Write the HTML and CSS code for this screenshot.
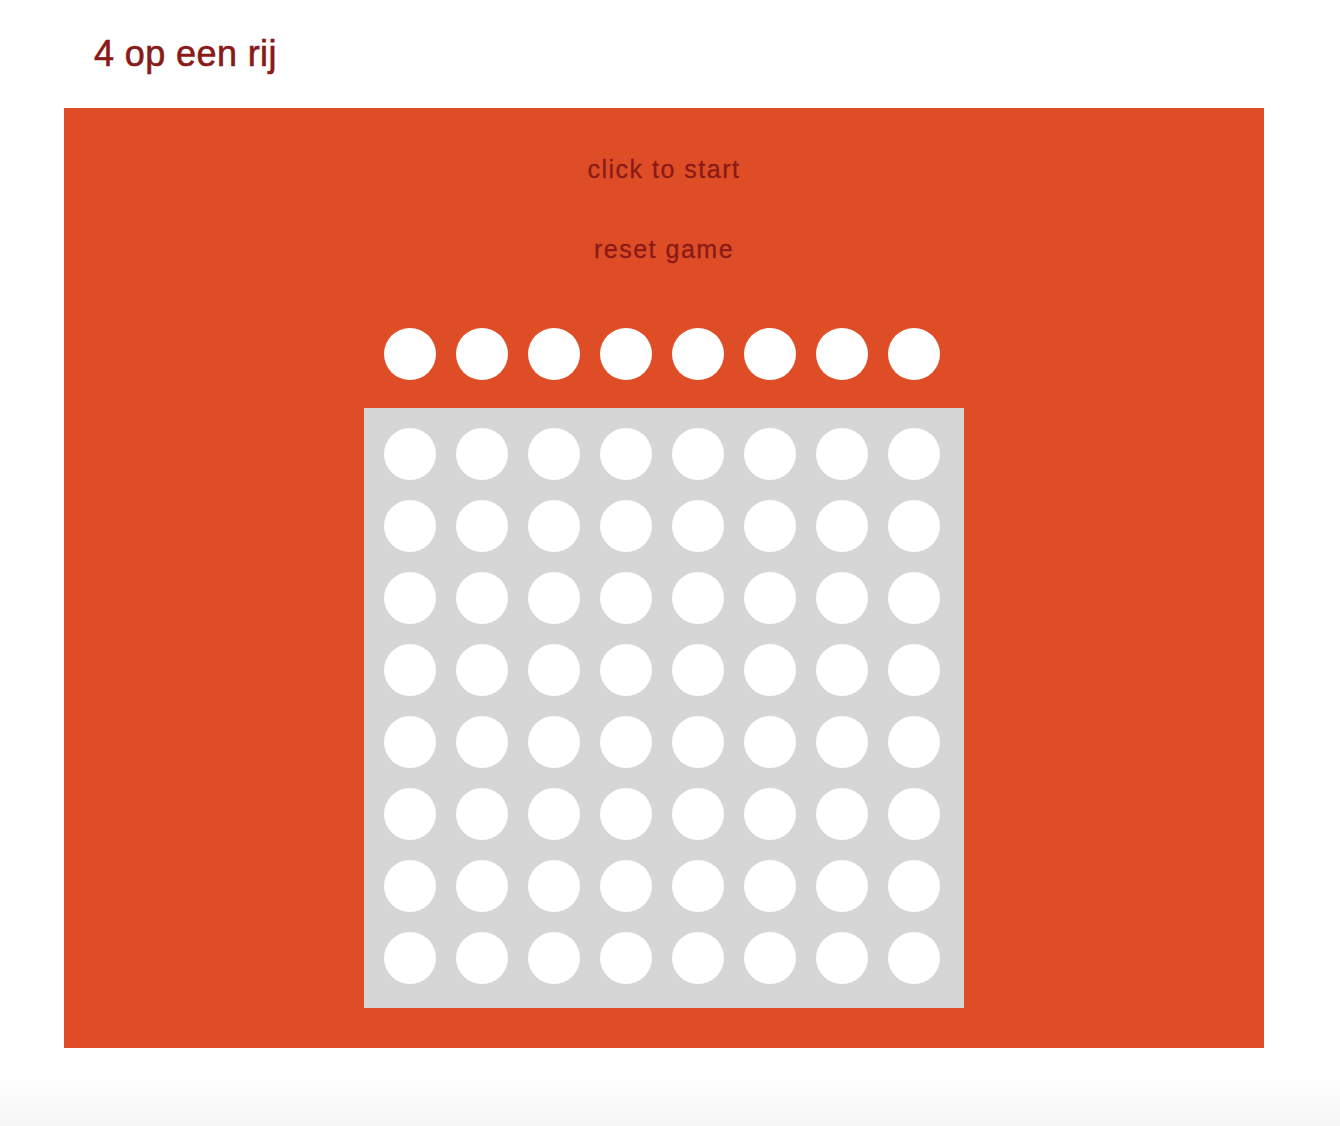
FILE: index.html
```html
<!DOCTYPE html>
<html lang="nl">
<head>
<meta charset="utf-8">
<title>4 op een rij</title>
<link rel="stylesheet" href="styles.css">
</head>
<body>
<header class="header">
  <h1 class="title">4 op een rij</h1>
</header>
<main class="game">
  <div class="control start">click to start</div>
  <div class="control reset">reset game</div>
  <div class="drop-row">
    <span class="disc"></span><span class="disc"></span><span class="disc"></span><span class="disc"></span><span class="disc"></span><span class="disc"></span><span class="disc"></span><span class="disc"></span>
  </div>
  <div class="board">
    <span class="disc"></span><span class="disc"></span><span class="disc"></span><span class="disc"></span><span class="disc"></span><span class="disc"></span><span class="disc"></span><span class="disc"></span>
    <span class="disc"></span><span class="disc"></span><span class="disc"></span><span class="disc"></span><span class="disc"></span><span class="disc"></span><span class="disc"></span><span class="disc"></span>
    <span class="disc"></span><span class="disc"></span><span class="disc"></span><span class="disc"></span><span class="disc"></span><span class="disc"></span><span class="disc"></span><span class="disc"></span>
    <span class="disc"></span><span class="disc"></span><span class="disc"></span><span class="disc"></span><span class="disc"></span><span class="disc"></span><span class="disc"></span><span class="disc"></span>
    <span class="disc"></span><span class="disc"></span><span class="disc"></span><span class="disc"></span><span class="disc"></span><span class="disc"></span><span class="disc"></span><span class="disc"></span>
    <span class="disc"></span><span class="disc"></span><span class="disc"></span><span class="disc"></span><span class="disc"></span><span class="disc"></span><span class="disc"></span><span class="disc"></span>
    <span class="disc"></span><span class="disc"></span><span class="disc"></span><span class="disc"></span><span class="disc"></span><span class="disc"></span><span class="disc"></span><span class="disc"></span>
    <span class="disc"></span><span class="disc"></span><span class="disc"></span><span class="disc"></span><span class="disc"></span><span class="disc"></span><span class="disc"></span><span class="disc"></span>
  </div>
</main>
</body>
</html>
```

FILE: styles.css
```css
html, body {
  margin: 0;
  padding: 0;
}

body {
  min-height: 1126px;
  font-family: "Liberation Sans", Arial, sans-serif;
  background: linear-gradient(to bottom, #ffffff 0, #ffffff 1072px, #f6f6f6 1126px);
}

.header {
  padding: 34px 0 0 94px;
  margin-bottom: 34px;
}

.title {
  margin: 0;
  font-size: 36px;
  line-height: 40px;
  font-weight: normal;
  letter-spacing: 0.4px;
  color: #8a1a17;
  -webkit-text-stroke: 0.6px #8a1a17;
}

.game {
  margin-left: 64px;
  width: 1200px;
  height: 940px;
  box-sizing: border-box;
  padding-top: 46px;
  background: #df4d26;
  display: flex;
  flex-direction: column;
  align-items: center;
}

.control {
  font-size: 25px;
  line-height: 30px;
  letter-spacing: 1.5px;
  color: #8a1a17;
  -webkit-text-stroke: 0.3px #8a1a17;
  cursor: pointer;
}

.reset {
  margin-top: 50px;
}

.drop-row {
  width: 600px;
  box-sizing: border-box;
  padding: 0 10px;
  margin-top: 54px;
  display: flex;
  flex-wrap: wrap;
}

.board {
  width: 600px;
  height: 600px;
  box-sizing: border-box;
  padding: 10px;
  margin-top: 18px;
  background: #d6d6d6;
  display: flex;
  flex-wrap: wrap;
  align-content: flex-start;
}

.disc {
  display: block;
  width: 52px;
  height: 52px;
  margin: 10px;
  border-radius: 50%;
  background: #ffffff;
}
```
